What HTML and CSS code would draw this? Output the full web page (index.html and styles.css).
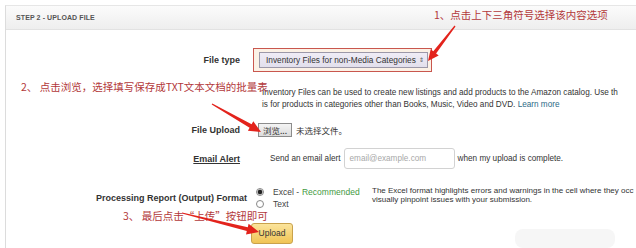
FILE: index.html
```html
<!DOCTYPE html>
<html>
<head>
<meta charset="utf-8">
<link rel="stylesheet" href="styles.css">
</head>
<body>
<div class="page">
  <div class="panel">
    <div class="panel-head">STEP 2 - UPLOAD FILE</div>
    <div class="panel-body">
      <div class="row row-type">
        <div class="label">File type</div>
        <div class="highlight">
          <div class="select"><span>Inventory Files for non-Media Categories</span><span class="updown">&#8661;</span></div>
        </div>
      </div>
      <div class="row row-desc">
        <div class="desc">Inventory Files can be used to create new listings and add products to the Amazon catalog. Use th<br>is for products in categories other than Books, Music, Video and DVD. <a class="link">Learn more</a></div>
      </div>
      <div class="row row-upload">
        <div class="label">File Upload</div>
        <div class="browse">浏览...</div>
        <span class="nofile">未选择文件。</span>
      </div>
      <div class="row row-email">
        <div class="label"><u>Email Alert</u></div>
        <span class="send">Send an email alert</span>
        <div class="input">email@example.com</div>
        <span class="when">when my upload is complete.</span>
      </div>
      <div class="row row-format">
        <div class="label label-wide">Processing Report (Output) Format</div>
        <div class="radios">
          <div class="radio-line"><span class="radio checked"></span>Excel - <span class="rec">Recommended</span></div>
          <div class="radio-line"><span class="radio"></span>Text</div>
        </div>
        <div class="format-desc">The Excel format highlights errors and warnings in the cell where they occ<br>visually pinpoint issues with your submission.</div>
      </div>
      <div class="row row-submit">
        <div class="upload-btn">Upload</div>
      </div>
    </div>
  </div>

  <div class="note note1">1、点击上下三角符号选择该内容选项</div>
  <div class="note note2">2、 点击浏览，选择填写保存成TXT文本文档的批量表</div>
  <div class="note note3">3、 最后点击“上传”按钮即可</div>

  <svg class="arrows" width="636" height="248" viewBox="0 0 636 248">
    <polygon points="455.5,26.4 436.1,53.4 438.7,55.4 428,61 430.7,49.2 433.3,51.2 454.5,25.6" fill="#e3231c"/>
    <polygon points="211.7,104.5 249.6,127.8 247.9,130.8 261,132 253.3,121.3 251.6,124.3 212.3,103.5" fill="#e3231c"/>
    <polygon points="181.9,213.6 246.8,231.0 246.0,234.4 259,232 248.6,223.8 247.8,227.2 182.1,212.4" fill="#e3231c"/>
  </svg>
  <div class="wm"></div>
</div>
</body>
</html>
```
FILE: styles.css
```css
html, body {
  margin: 0;
  padding: 0;
  background: #ffffff;
  overflow: hidden;
  width: 636px;
  height: 248px;
}
.page {
  position: relative;
  width: 636px;
  height: 248px;
  padding: 5px 0 0 5px;
  box-sizing: border-box;
  overflow: hidden;
  font-family: "Liberation Sans", Arial, sans-serif;
  color: #333;
}
.panel {
  border-left: 1px solid #dcdcdc;
  border-top: 1px solid #e6e6e6;
  height: 243px;
  width: 631px;
  box-sizing: border-box;
  overflow: hidden;
}
.panel-head {
  height: 23px;
  line-height: 24px;
  background: linear-gradient(#fbfbfb, #eeeeee);
  border-bottom: 1px solid #e2e2e2;
  padding-left: 10px;
  font-size: 7px;
  font-weight: bold;
  color: #555;
  letter-spacing: 0.1px;
}
.row {
  display: flex;
  align-items: center;
  white-space: nowrap;
}
.label {
  width: 234px;
  flex: none;
  text-align: right;
  font-size: 9px;
  font-weight: bold;
  color: #333;
}
.label u { text-decoration: underline; }
.label-wide { width: 241px; }

.row-type { margin-top: 18px; height: 24px; }
.highlight {
  margin-left: 13px;
  width: 179px;
  height: 24px;
  box-sizing: border-box;
  border: 1.5px solid #c9574e;
  background: #fbf1e6;
  padding: 3px 3px 0 5px;
}
.select {
  height: 16px;
  box-sizing: border-box;
  border: 1px solid #9c98a8;
  background: linear-gradient(#efecf6, #e2dfec);
  font-size: 8.3px;
  line-height: 14px;
  padding-left: 6px;
  color: #333;
  display: flex;
  justify-content: space-between;
  padding-right: 3px;
}
.updown { font-size: 6px; color: #555; }

.row-desc { margin-top: 15px; }
.desc {
  margin-left: 256px;
  font-size: 8.2px;
  line-height: 12px;
  color: #333;
}
.link { color: #2d6a87; }

.row-upload { margin-top: 10px; height: 18px; }
.browse {
  margin-left: 18px;
  height: 14px;
  box-sizing: border-box;
  border: 1px solid #8c8c8c;
  background: linear-gradient(#f4f4f4, #dcdcdc);
  font-size: 8.5px;
  line-height: 12px;
  padding: 0 4px;
  font-family: "Noto Sans CJK SC", sans-serif;
}
.nofile {
  margin-left: 4px;
  font-size: 8.5px;
  font-family: "Noto Sans CJK SC", sans-serif;
  color: #333;
}

.row-email { margin-top: 9px; height: 21px; }
.send { margin-left: 30px; font-size: 8.2px; }
.input {
  margin-left: 3px;
  width: 111px;
  height: 21px;
  box-sizing: border-box;
  border: 1px solid #d2d2d2;
  border-radius: 3px;
  font-size: 8.2px;
  line-height: 19px;
  padding-left: 5px;
  color: #a8a8a8;
}
.when { margin-left: 3px; font-size: 8.2px; }

.row-format { margin-top: 17px; height: 24px; }
.radios { margin-left: 9px; width: 116px; flex: none; }
.radio-line {
  display: flex;
  align-items: center;
  height: 12px;
  font-size: 8.5px;
  color: #444;
}
.radio {
  width: 6px;
  height: 6px;
  border-radius: 50%;
  border: 1px solid #888;
  margin-right: 9px;
  background: #fff;
}
.radio.checked {
  background: radial-gradient(circle, #222 45%, #bbb 60%, #fff 75%);
}
.rec { color: #3f9a3f; margin-left: 3px; }
.format-desc {
  font-size: 8px;
  line-height: 9px;
  color: #333;
  align-self: flex-start;
}

.row-submit { margin-top: 13px; }
.upload-btn {
  margin-left: 245px;
  width: 42px;
  height: 21px;
  box-sizing: border-box;
  border: 1px solid #c9a24c;
  border-radius: 3px;
  background: linear-gradient(#fbe49c, #f0c455);
  font-size: 8.5px;
  line-height: 19px;
  text-align: center;
  color: #333;
}

.note {
  position: absolute;
  font-family: "Noto Sans CJK SC", sans-serif;
  font-size: 10.5px;
  color: #b3393b;
  white-space: nowrap;
  line-height: 14px;
}
.note1 { left: 434px; top: 8px; }
.note2 { left: 21px; top: 80px; }
.note3 { left: 123px; top: 209px; }

.arrows {
  position: absolute;
  left: 0;
  top: 0;
  pointer-events: none;
}
.wm {
  position: absolute;
  left: 515px;
  top: 229px;
  width: 100px;
  height: 19px;
  border-radius: 8px;
  background: #f6f6f6;
}
```
